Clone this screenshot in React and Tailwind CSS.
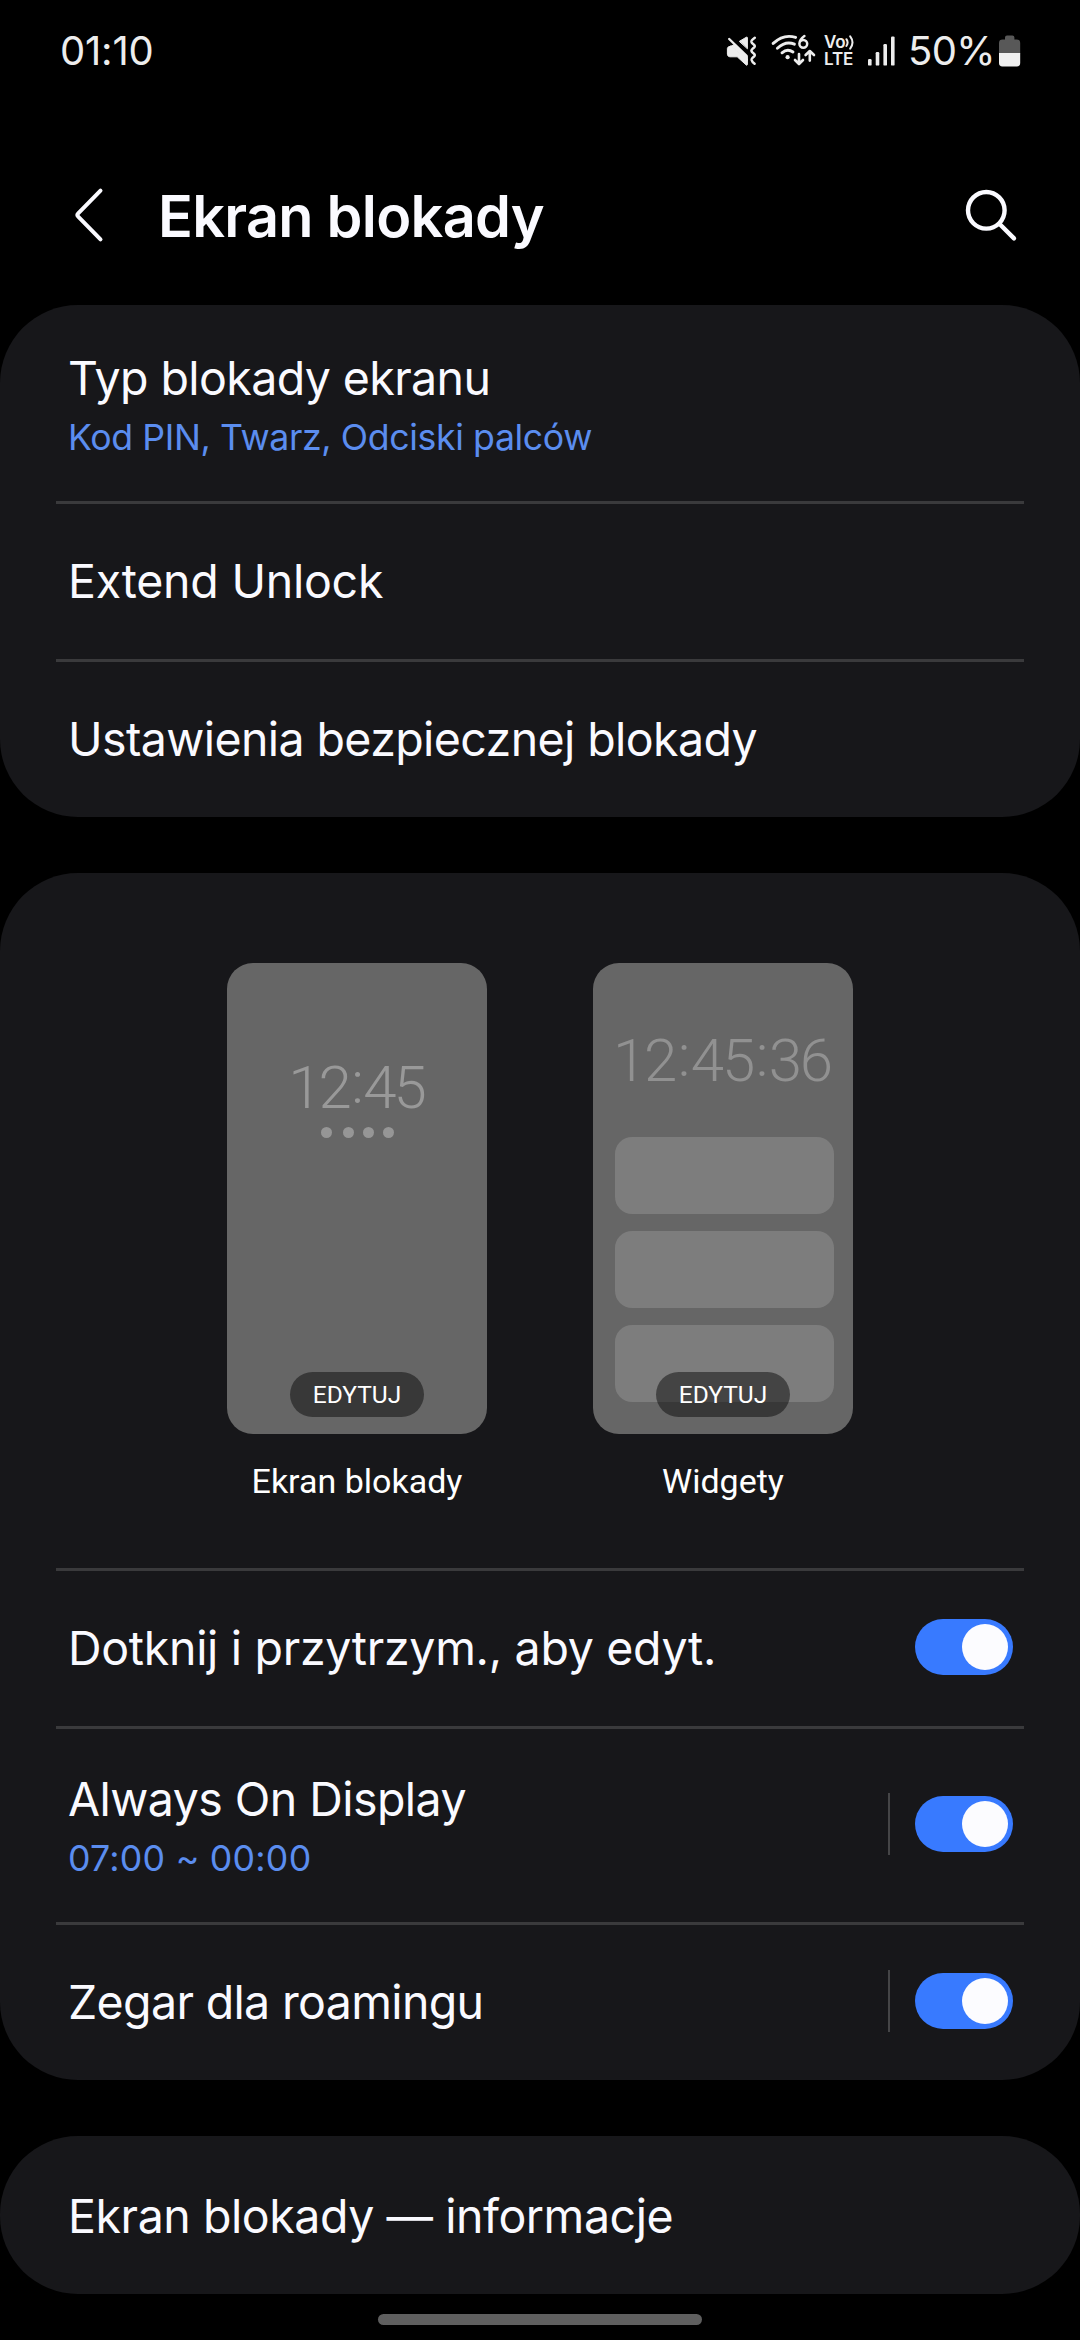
import { clsx } from 'clsx'

function MuteVibrateIcon() {
  return (
    <svg className="w-[32px] h-[32px]" viewBox="0 0 32 32" fill="#ededed" stroke="#ededed" strokeLinecap="round" strokeLinejoin="round">
      <path strokeWidth="1" d="M13.6 6.2 20.4 2.2Q21.4 1.8 21.4 3V13.4Z" />
      <path strokeWidth="1" d="M5 11.2 21.4 24V29.6Q21.2 30.8 20 29.8L11.2 21.8H3.8Q1.4 21.4 1.4 19.2V13.4Q1.6 11.2 5 11.2Z" />
      <path strokeWidth="1" d="M5 11.2 8.6 9.4 21.4 21.4V25Z" />
      <path strokeWidth="2.4" d="M3.2 4 20.6 20.8" />
      <path fill="none" strokeWidth="2.5" d="M28.8 2.8Q25.2 5.4 25.4 6.8 25.6 8 27.4 9.2 29.4 10.6 28.4 12.2 25.4 14.4 25.4 15.8 25.6 17 27.4 18.2 29.4 19.6 28.4 21.2 25.4 23.4 25.6 25 26 26.8 28.6 28.8" />
    </svg>
  )
}

function WifiIcon() {
  return (
    <svg className="w-[46px] h-[34px]" viewBox="0 0 46 34" fill="none" stroke="#ededed" strokeWidth="2.9" strokeLinecap="round">
      <path d="M2.2 9.4Q12.6 -0.4 24.6 3.4" />
      <path d="M6.4 14.2Q14.8 6.4 23.4 10.2" />
      <path d="M11 18.8Q16.4 14 22 18" />
      <circle cx="16.6" cy="23.2" r="2.1" fill="#ededed" stroke="none" />
      <path strokeWidth="2.5" d="M33.4 2Q28.6 5.4 28.4 9.6M36.2 9.8A3.9 3.9 0 1 1 28.4 9.8 3.9 3.9 0 1 1 36.2 9.8Z" />
      <path strokeWidth="2.6" strokeLinejoin="round" d="M28 20V29.6M24 26 28 30 32 26M38.8 26.6V17.4M34.6 21 38.8 17 43 21" />
    </svg>
  )
}

function SignalIcon() {
  return (
    <svg className="w-[28px] h-[30px]" viewBox="0 0 28 30" fill="#ededed">
      <rect x="0" y="23" width="3.6" height="6.6" rx="1.2" />
      <rect x="7.7" y="16" width="3.6" height="13.6" rx="1.2" />
      <rect x="15.4" y="8" width="3.6" height="21.6" rx="1.2" />
      <rect x="23" y="0.4" width="3.6" height="29.2" rx="1.2" />
    </svg>
  )
}

function BatteryIcon() {
  return (
    <svg className="w-[22px] h-[32px]" viewBox="0 0 22 32">
      <path fill="#585858" d="M6 4.6V2.6Q6 0.6 8 0.6H13.4Q15.4 0.6 15.4 2.6V4.6H17.6Q21.2 4.6 21.2 8V18.4H0V8Q0 4.6 3.6 4.6Z" />
      <path fill="#f0f0f0" d="M0 18H21.2V28Q21.2 31.4 17.8 31.4H3.4Q0 31.4 0 28Z" />
    </svg>
  )
}

function VolteIcon() {
  return (
    <div className="w-[31px] flex flex-col text-[#ededed] font-semibold">
      <div className="flex h-[16px] items-center">
        <span className="text-[17px] leading-[15px] tracking-[-0.2px]">Vo</span>
        <svg className="w-[9px] h-[15px]" viewBox="0 0 9 15" fill="none" stroke="#ededed" strokeWidth="2" strokeLinecap="round">
          <path d="M1.4 4.2Q3.8 7.6 1.4 11M5.2 1.4Q9.8 7.4 5.2 13.6" />
        </svg>
      </div>
      <span className="text-[17px] leading-[17px] tracking-[-0.1px]">LTE</span>
    </div>
  )
}

function StatusBar() {
  return (
    <div className="h-[102px] pl-[60px] flex items-center text-[40px] leading-[48px] text-[#ededed]">
      <span className="tracking-[-0.2px]">01:10</span>
      <div className="ml-auto mr-[59px] flex items-center">
        <MuteVibrateIcon />
        <div className="ml-[13px]"><WifiIcon /></div>
        <div className="ml-[7px]"><VolteIcon /></div>
        <div className="ml-[13px]"><SignalIcon /></div>
        <span className="ml-[12px] w-[87px] tracking-[-0.6px] whitespace-nowrap">50%</span>
        <div className="ml-[4px]"><BatteryIcon /></div>
      </div>
    </div>
  )
}

function Header() {
  return (
    <header className="h-[203px] pl-[73px] pr-[61px] pt-[22px] flex items-center">
      <svg className="w-[32px] h-[56px]" viewBox="0 0 32 56" fill="none" stroke="#fafaff" strokeWidth="4" strokeLinecap="round" strokeLinejoin="round">
        <path d="M27.5 3.6 5.2 26.4Q3.6 28 5.2 29.6L27.5 52.4" />
      </svg>
      <h1 className="ml-[53px] mt-[2px] text-[57.6px] leading-[70px] font-semibold tracking-[-0.7px] text-[#fafaff]">
        Ekran blokady
      </h1>
      <svg className="ml-auto w-[54px] h-[54px]" viewBox="0 0 54 54" fill="none" stroke="#fafaff" strokeWidth="4.4" strokeLinecap="round">
        <circle cx="21.3" cy="22.3" r="18.3" />
        <path d="M34.6 36 49 50.4" />
      </svg>
    </header>
  )
}

function Card({ children }) {
  return <section className="rounded-[78px] bg-[#17171a] overflow-hidden">{children}</section>
}

function Toggle() {
  return (
    <div className="w-[98px] h-[56px] rounded-full bg-[#387aff] flex items-center justify-end pr-[5px]">
      <div className="w-[46px] h-[46px] rounded-full bg-[#fcfcff]" />
    </div>
  )
}

function Row({ title, sub, first, toggle, split, titleClass, subClass }) {
  return (
    <div
      className={clsx(
        'mx-[56px] border-t-[3px] pl-[12px] pr-[11px] flex items-center',
        first ? 'border-transparent' : 'border-[#3a3a3c]',
        sub ? 'h-[196px]' : 'h-[158px]'
      )}
    >
      <div className={clsx('flex flex-col whitespace-nowrap', !sub && 'pb-px')}>
        <span className={clsx('text-[46.5px] leading-[56px] text-[#fafaff]', titleClass)}>{title}</span>
        {sub && <span className={clsx('mt-[10px] text-[35.7px] leading-[43px] text-[#5b8def]', subClass)}>{sub}</span>}
      </div>
      {toggle && (
        <div className="ml-auto -mt-[3px] flex items-center">
          {split && <div className="w-[2px] h-[62px] mr-[25px] bg-[#454547]" />}
          <Toggle />
        </div>
      )}
    </div>
  )
}

function Clock({ time, className }) {
  return (
    <div className={clsx('h-[70px] flex text-[60px] leading-[70px] font-light', className)}>
      {time.split(':').map((part, i) => (
        <span key={i}>
          {i > 0 && <span className="inline-block mx-[2.5px] -translate-y-[5px]">:</span>}
          {part}
        </span>
      ))}
    </div>
  )
}

function Preview({ label, children }) {
  return (
    <div className="flex flex-col items-center font-['Roboto',sans-serif]">
      <div className="relative w-[260px] h-[471px] rounded-[26px] bg-[#666666] flex flex-col items-center">
        {children}
        <div className="absolute left-[63px] bottom-[17px] w-[134px] h-[45px] pt-[2px] rounded-full bg-black/45 flex items-center justify-center text-[24.5px] leading-none text-white">
          EDYTUJ
        </div>
      </div>
      <span className="mt-[27px] text-[34px] leading-[40px] text-white">{label}</span>
    </div>
  )
}

function Previews() {
  return (
    <div className="h-[695px] pt-[90px] flex justify-center gap-[106px]">
      <Preview label="Ekran blokady">
        <Clock time="12:45" className="mt-[90px] mr-[2px] tracking-[-3px] text-[#999999]" />
        <div className="mt-[4px] flex gap-[9px]">
          <div className="w-[11px] h-[11px] rounded-full bg-[#969696] mr-[2px]" />
          <div className="w-[11px] h-[11px] rounded-full bg-[#969696]" />
          <div className="w-[11px] h-[11px] rounded-full bg-[#969696]" />
          <div className="w-[11px] h-[11px] rounded-full bg-[#969696]" />
        </div>
      </Preview>
      <Preview label="Widgety">
        <Clock time="12:45:36" className="mt-[63px] mr-[2px] tracking-[-2.1px] text-[#919191]" />
        <div className="mt-[41px] ml-[3px] flex flex-col gap-[17px]">
          <div className="w-[219px] h-[77px] rounded-[17px] bg-[#7d7d7d]" />
          <div className="w-[219px] h-[77px] rounded-[17px] bg-[#7d7d7d]" />
          <div className="w-[219px] h-[77px] rounded-[17px] bg-[#7d7d7d]" />
        </div>
      </Preview>
    </div>
  )
}

export default function App() {
  return (
    <div className="w-[1080px] h-[2340px] bg-black overflow-hidden flex flex-col font-['Inter',sans-serif]">
      <StatusBar />
      <Header />
      <main className="flex flex-col gap-[56px]">
        <Card>
          <Row
            first
            title="Typ blokady ekranu"
            sub="Kod PIN, Twarz, Odciski palców"
            titleClass="tracking-[-0.6px]"
            subClass="tracking-[-0.38px]"
          />
          <Row title="Extend Unlock" titleClass="tracking-[-0.25px]" />
          <Row title="Ustawienia bezpiecznej blokady" titleClass="tracking-[-0.6px]" />
        </Card>
        <Card>
          <Previews />
          <Row title="Dotknij i przytrzym., aby edyt." toggle titleClass="tracking-[-0.3px]" />
          <Row
            title="Always On Display"
            sub="07:00 ~ 00:00"
            toggle
            split
            titleClass="tracking-[-0.55px]"
            subClass="tracking-[0.25px]"
          />
          <Row title="Zegar dla roamingu" toggle split titleClass="tracking-[-0.65px]" />
        </Card>
        <Card>
          <Row first title="Ekran blokady — informacje" titleClass="tracking-[-0.45px]" />
        </Card>
      </main>
      <div className="mt-[20px] mx-auto w-[324px] h-[11px] rounded-full bg-[#5f5f5f]" />
    </div>
  )
}
